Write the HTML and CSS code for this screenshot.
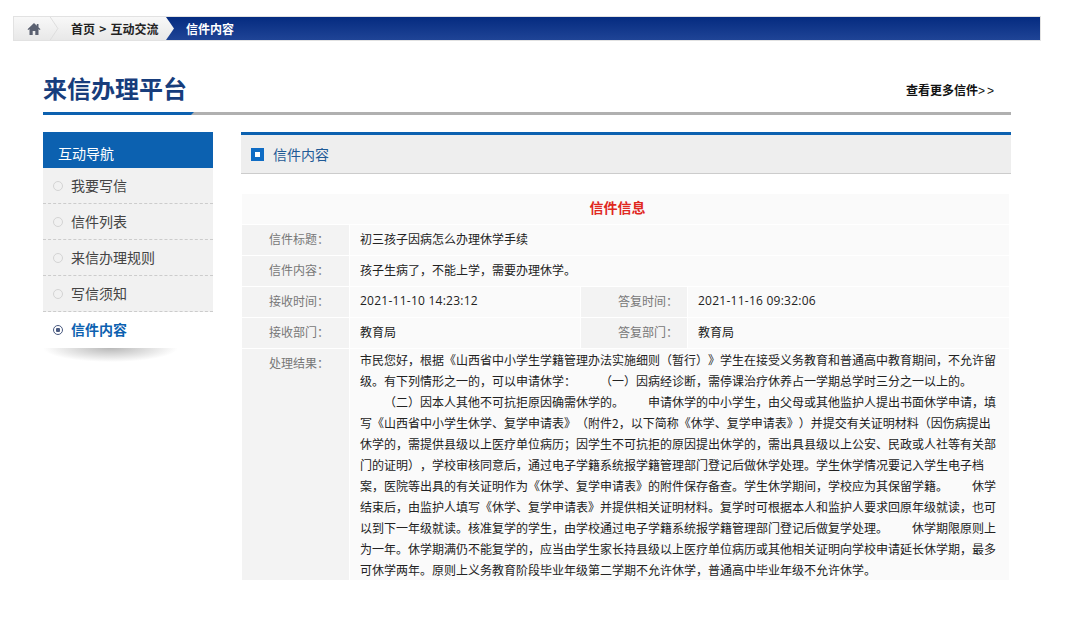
FILE: index.html
```html
<!DOCTYPE html>
<html lang="zh-CN">
<head>
    <meta charset="UTF-8">
    <meta name="viewport" content="width=device-width, initial-scale=1.0">
    <title>来信办理平台</title>
    <link rel="stylesheet" href="styles.css">
</head>
<body>
    <div class="crumb">
        <div class="crumb-links">
            <svg class="home-icon" viewBox="0 0 14 14" width="14" height="14"><path d="M7 1 0.5 7.2 1.4 8 2.5 7V13H5.7V9H8.3V13H11.5V7L12.6 8 13.5 7.2 11.5 5.3V2H9.8V3.7Z" fill="#5a6070"/></svg>
            <svg class="crumb-sep" viewBox="0 0 10 24" width="10" height="23"><path d="M0 0 8 12 0 24" fill="none" stroke="#dcdcdc"/></svg>
            <span class="crumb-text">首页 &gt; 互动交流</span>
        </div>
        <div class="crumb-current">信件内容</div>
    </div>

    <div class="page">
        <div class="page-head">
            <h1>来信办理平台</h1>
            <a class="more">查看更多信件<span class="more-arrow">&gt;&gt;</span></a>
        </div>
        <div class="page-rule"><div class="rule-blue"></div></div>

        <div class="layout">
            <div class="side">
                <div class="side-title">互动导航</div>
                <ul class="side-nav">
                    <li>我要写信</li>
                    <li>信件列表</li>
                    <li>来信办理规则</li>
                    <li>写信须知</li>
                    <li class="active">信件内容</li>
                </ul>
                <div class="side-shadow"></div>
            </div>
            <div class="main">
                <div class="main-title"><span class="square"></span>信件内容</div>
                <table class="info">
                    <colgroup>
                        <col class="c1"><col class="c2"><col class="c3"><col class="c4">
                    </colgroup>
                    <tr><td colspan="4" class="info-head">信件信息</td></tr>
                    <tr><th>信件标题：</th><td colspan="3">初三孩子因病怎么办理休学手续</td></tr>
                    <tr><th>信件内容：</th><td colspan="3">孩子生病了，不能上学，需要办理休学。</td></tr>
                    <tr><th>接收时间：</th><td class="num">2021-11-10 14:23:12</td><th class="label-r">答复时间：</th><td class="num">2021-11-16 09:32:06</td></tr>
                    <tr><th>接收部门：</th><td>教育局</td><th class="label-r">答复部门：</th><td>教育局</td></tr>
                    <tr class="result">
                        <th>处理结果：</th>
                        <td colspan="3">市民您好，根据《山西省中小学生学籍管理办法实施细则（暂行）》学生在接受义务教育和普通高中教育期间，不允许留级。有下列情形之一的，可以申请休学：　　（一）因病经诊断，需停课治疗休养占一学期总学时三分之一以上的。<br>　　（二）因本人其他不可抗拒原因确需休学的。　　申请休学的中小学生，由父母或其他监护人提出书面休学申请，填写《山西省中小学生休学、复学申请表》（附件2，以下简称《休学、复学申请表》）并提交有关证明材料（因伤病提出休学的，需提供县级以上医疗单位病历；因学生不可抗拒的原因提出休学的，需出具县级以上公安、民政或人社等有关部门的证明），学校审核同意后，通过电子学籍系统报学籍管理部门登记后做休学处理。学生休学情况要记入学生电子档案，医院等出具的有关证明作为《休学、复学申请表》的附件保存备查。学生休学期间，学校应为其保留学籍。　　休学结束后，由监护人填写《休学、复学申请表》并提供相关证明材料。复学时可根据本人和监护人要求回原年级就读，也可以到下一年级就读。核准复学的学生，由学校通过电子学籍系统报学籍管理部门登记后做复学处理。　　休学期限原则上为一年。休学期满仍不能复学的，应当由学生家长持县级以上医疗单位病历或其他相关证明向学校申请延长休学期，最多可休学两年。原则上义务教育阶段毕业年级第二学期不允许休学，普通高中毕业年级不允许休学。</td>
                    </tr>
                </table>
            </div>
        </div>
    </div>
</body>
</html>
```

FILE: styles.css
```css
body {
    margin: 0;
    background-color: #fff;
    font-family: "Noto Sans CJK SC", "Liberation Sans", sans-serif;
    font-size: 12px;
    color: #333;
    text-spacing-trim: space-all;
}
.crumb {
    display: flex;
    width: 1026px;
    height: 23px;
    margin: 16px 0 0 13px;
    border: 1px solid #e2e2e2;
    background: linear-gradient(#052b80, #1f4496);
}
.crumb-links {
    display: flex;
    flex: 0 0 auto;
    align-items: center;
    box-sizing: border-box;
    width: 160px;
    padding-left: 13px;
    background: linear-gradient(#f8f8f8, #e8e8e8);
    clip-path: polygon(0 0, 152px 0, 100% 50%, 152px 100%, 0 100%);
    color: #222;
    font-weight: bold;
}
.crumb-sep {
    margin-left: 9px;
}
.crumb-text {
    margin-left: 11px;
    word-spacing: 1.5px;
}
.crumb-current {
    margin-left: 12px;
    line-height: 23px;
    color: #fff;
    font-weight: bold;
}
.page {
    width: 968px;
    margin: 0 0 0 43px;
}
.page-head {
    display: flex;
    justify-content: space-between;
    align-items: flex-end;
    box-sizing: border-box;
    height: 71px;
    padding-bottom: 6px;
}
h1 {
    margin: 0;
    font-size: 24px;
    line-height: 36px;
    color: #173d7c;
}
.more {
    margin: 0 15px 5px 0;
    color: #111;
    font-weight: bold;
    line-height: 20px;
}
.more-arrow {
    font-family: "Liberation Sans", sans-serif;
    font-weight: normal;
    letter-spacing: 2px;
}
.page-rule {
    height: 3px;
    background-color: #b0b0b0;
}
.rule-blue {
    width: 151px;
    height: 3px;
    background-color: #0c61b0;
    clip-path: polygon(0 0, 100% 0, 148px 100%, 0 100%);
}
.layout {
    display: flex;
    justify-content: space-between;
    margin-top: 17px;
}
.side {
    width: 170px;
}
.side-title {
    height: 36px;
    padding-left: 15px;
    line-height: 42px;
    font-size: 14px;
    color: #fff;
    background-color: #0c61b0;
}
.side-nav {
    margin: 0;
    padding: 0;
    list-style: none;
}
.side-nav li {
    position: relative;
    height: 35px;
    padding-left: 28px;
    line-height: 35px;
    font-size: 14px;
    color: #444;
    background-color: #f1f1f1;
    border-bottom: 1px dashed #ccc;
}
.side-nav li::before {
    content: "";
    position: absolute;
    left: 10px;
    top: 13px;
    width: 8px;
    height: 8px;
    border: 1px solid #d4d4d4;
    border-radius: 50%;
}
.side-nav li.active {
    height: 36px;
    border-bottom: 0;
    background-color: #fff;
    color: #0c61b0;
    font-weight: bold;
}
.side-nav li.active::before {
    border-color: #4a5a80;
    background: radial-gradient(circle, #4a5a80 2px, #fff 2.5px);
}
.side-shadow {
    width: 135px;
    height: 14px;
    background: radial-gradient(ellipse 50% 100% at 50% 0, #b8b8b8, #fff);
}
.main {
    width: 770px;
}
.main-title {
    display: flex;
    align-items: center;
    height: 38px;
    padding-left: 10px;
    font-size: 14px;
    color: #1f5a96;
    background-color: #eee;
    border-top: 3px solid #0c61b0;
    border-bottom: 1px solid #ccc;
}
.square {
    box-sizing: border-box;
    width: 13px;
    height: 13px;
    margin-right: 9px;
    border: 4px solid #0f6cc4;
    background-color: #fff;
}
.info {
    width: 769px;
    margin-top: 19px;
    border-collapse: collapse;
    table-layout: fixed;
    background-color: #fafafa;
}
.c1 { width: 108px; }
.c2 { width: 231px; }
.c3 { width: 107px; }
.info th, .info td {
    height: 28px;
    padding: 0 10px 2px 10px;
    border: 1px solid #fff;
    font-weight: normal;
    line-height: 22px;
    color: #222;
}
.info th {
    padding: 0 20px 2px 0;
    text-align: right;
    color: #777;
    background-color: #f3f3f3;
}
.info th.label-r {
    padding-right: 9px;
}
.info td.num {
    font-family: "Open Sans", sans-serif;
    letter-spacing: 0.25px;
}
.info td.info-head {
    height: 26px;
    padding: 0 16px 4px 0;
    text-align: center;
    font-size: 14px;
    font-weight: bold;
    color: #e0281e;
}
.result th, .result td {
    vertical-align: top;
}
.info .result th {
    padding-top: 3px;
}
.info .result td {
    padding-bottom: 0;
    line-height: 21px;
}
```
